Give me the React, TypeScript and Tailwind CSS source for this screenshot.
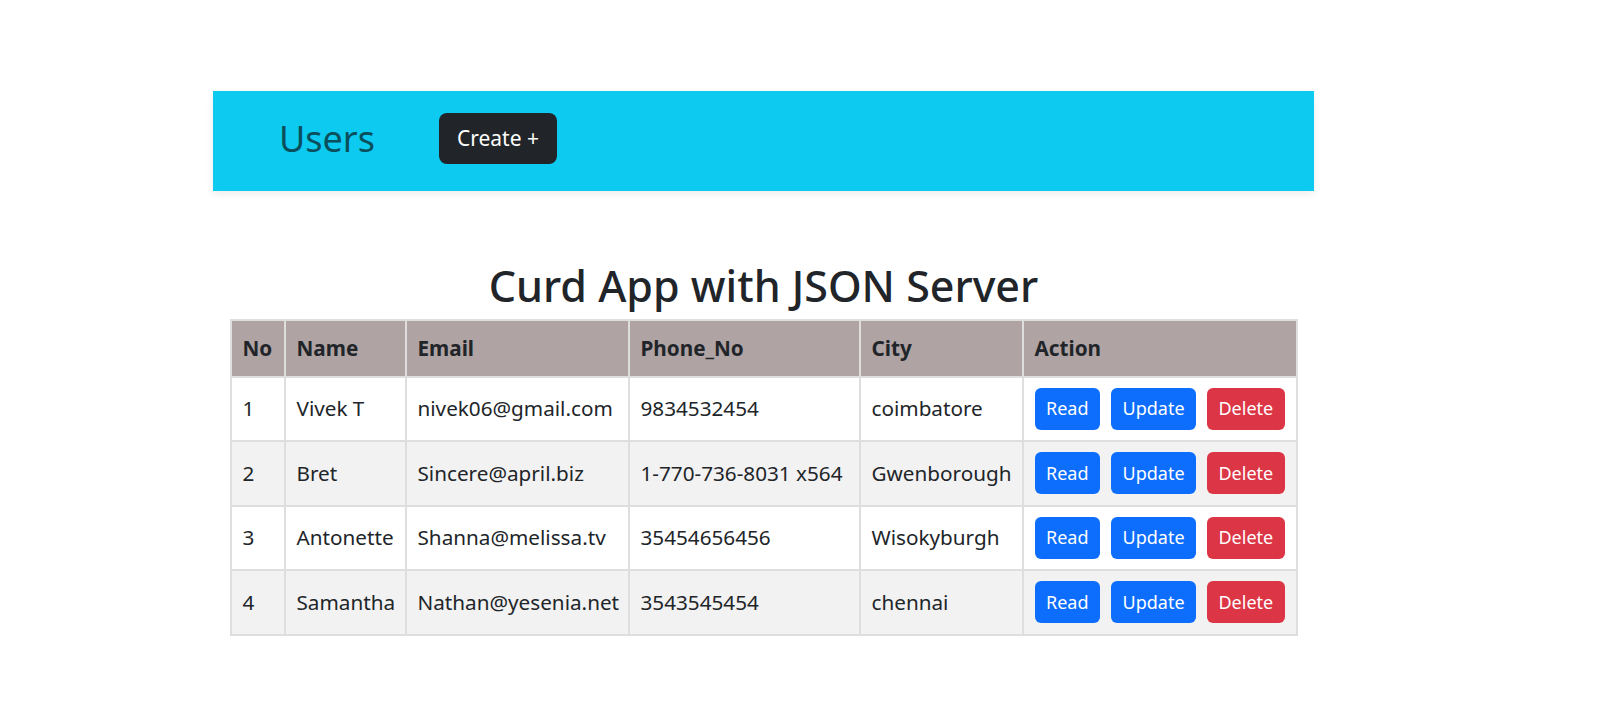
const users = [
  { id: 1, name: 'Vivek T', email: 'nivek06@gmail.com', phone: '9834532454', city: 'coimbatore' },
  { id: 2, name: 'Bret', email: 'Sincere@april.biz', phone: '1-770-736-8031 x564', city: 'Gwenborough' },
  { id: 3, name: 'Antonette', email: 'Shanna@melissa.tv', phone: '35454656456', city: 'Wisokyburgh' },
  { id: 4, name: 'Samantha', email: 'Nathan@yesenia.net', phone: '3543545454', city: 'chennai' },
];

const cell = 'border-2 border-[#dedede] px-[11px] align-middle';

export default function App() {
  return (
    <div className="min-h-screen bg-white text-[#212529] font-['Noto_Sans',sans-serif]">
      <div className="ml-[213px] w-[1101px] pt-[91px]">
        <nav className="flex h-[100px] items-center bg-[#0dcaf0] pb-[5px] pl-[66px] shadow-[0_3px_8px_rgba(0,0,0,0.08)]">
          <span className="text-[36px] leading-none text-[#0a4f5c]">Users</span>
          <button className="ml-[64px] flex h-[51px] w-[118px] items-center justify-center rounded-[8px] bg-[#212529] text-[21px] text-white">
            Create +
          </button>
        </nav>

        <h1 className="mt-[69px] text-center text-[43px] font-medium leading-[1.2]">Curd App with JSON Server</h1>

        <table className="mx-auto mt-[7px] w-[1066px] table-fixed border-collapse text-left text-[20.7px]">
          <thead>
            <tr className="h-[57px] bg-[#afa3a3]">
              <th className={`${cell} w-[54px] font-bold`}>No</th>
              <th className={`${cell} w-[121px] font-bold`}>Name</th>
              <th className={`${cell} w-[223px] font-bold`}>Email</th>
              <th className={`${cell} w-[231px] font-bold`}>Phone_No</th>
              <th className={`${cell} w-[163px] font-bold`}>City</th>
              <th className={`${cell} w-[274px] font-bold`}>Action</th>
            </tr>
          </thead>
          <tbody>
            {users.map((u, i) => (
              <tr key={u.id} className={i % 2 === 1 ? 'h-[64.5px] bg-[#f2f2f2]' : 'h-[64.5px] bg-white'}>
                <td className={cell}>{u.id}</td>
                <td className={`${cell} whitespace-nowrap`}>{u.name}</td>
                <td className={`${cell} whitespace-nowrap`}>{u.email}</td>
                <td className={`${cell} whitespace-nowrap`}>{u.phone}</td>
                <td className={`${cell} whitespace-nowrap`}>{u.city}</td>
                <td className={cell}>
                  <div className="flex gap-[11px]">
                    <button className="h-[42px] w-[66px] rounded-[6px] bg-[#0d6efd] text-[18px] text-white">Read</button>
                    <button className="h-[42px] w-[86px] rounded-[6px] bg-[#0d6efd] text-[18px] text-white">Update</button>
                    <button className="h-[42px] w-[78px] rounded-[6px] bg-[#dc3545] text-[18px] text-white">Delete</button>
                  </div>
                </td>
              </tr>
            ))}
          </tbody>
        </table>
      </div>
    </div>
  );
}
